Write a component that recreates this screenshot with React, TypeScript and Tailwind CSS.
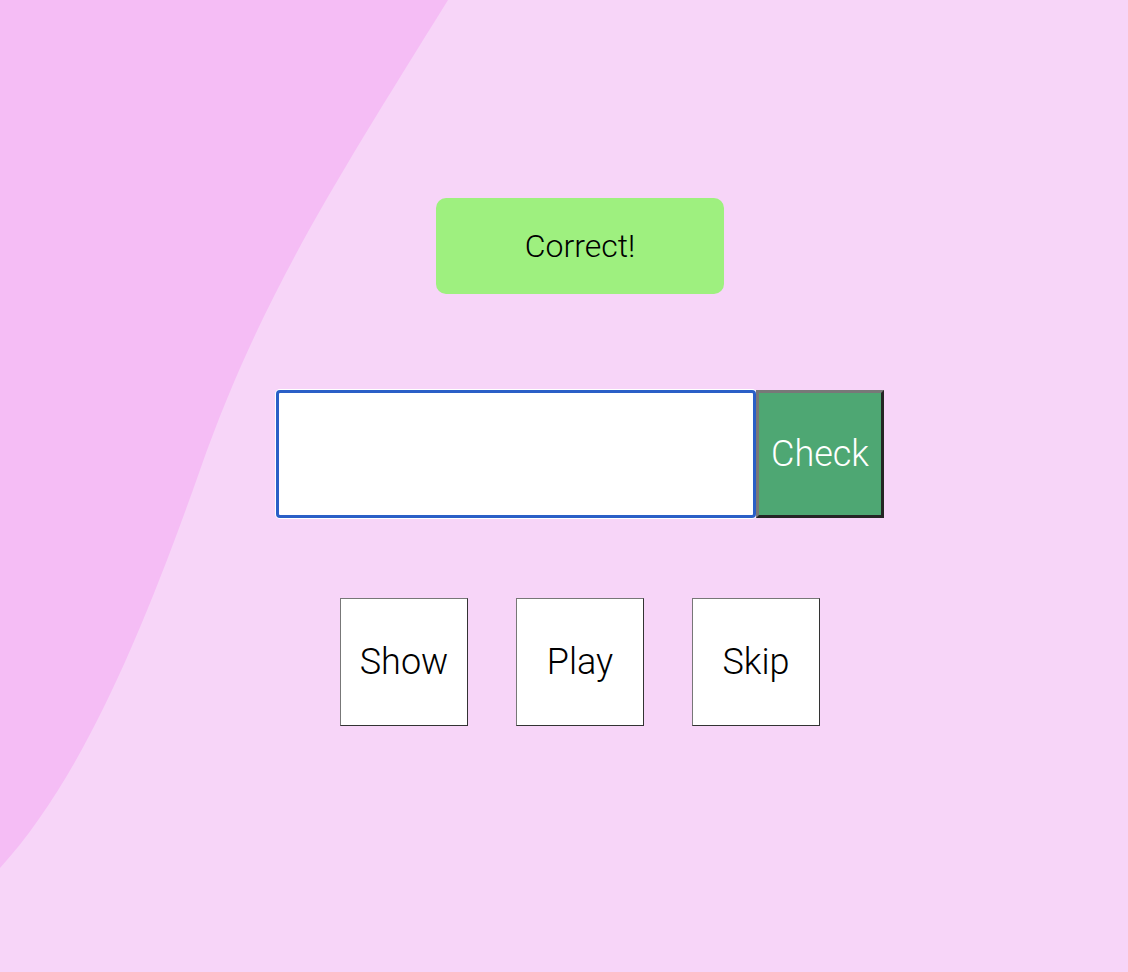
import React from "react";

// background wave, drawn once behind the content
function Wave() {
  return (
    <svg
      className="absolute inset-0 h-full w-full"
      viewBox="0 0 1128 972"
      preserveAspectRatio="none"
      aria-hidden
    >
      <path
        d="M448 0 C330 190 260 300 200 470 S80 780 0 868 L0 0 Z"
        fill="#f5bdf5"
      />
    </svg>
  );
}

const actions = ["Show", "Play", "Skip"];

export default function App() {
  return (
    <div
      className="relative min-h-screen h-[972px] overflow-hidden bg-[#f7d5f8]"
      style={{ fontFamily: "Roboto, 'Liberation Sans', sans-serif" }}
    >
      <Wave />

      <main className="relative flex flex-col items-center pt-[198px] pl-8">
        {/* feedback banner */}
        <div className="flex h-[96px] w-[288px] items-center justify-center rounded-[10px] bg-[#9ef07f] text-[32px] font-light text-black">
          Correct!
        </div>

        {/* answer row */}
        <div className="mt-[96px] flex">
          <input
            type="text"
            className="h-[128px] w-[480px] rounded-[4px] border-[3px] border-[#2a5fc7] bg-white px-3 text-[32px] shadow-[0_0_0_1px_#ffffff] outline-none"
          />
          <button className="h-[128px] w-[128px] border-[3px] border-t-[#787878] border-l-[#787878] border-r-[#252525] border-b-[#252525] bg-[#4ea773] text-[36px] font-light text-white">
            Check
          </button>
        </div>

        {/* action buttons */}
        <div className="mt-[80px] flex gap-12">
          {actions.map((label) => (
            <button
              key={label}
              className="h-[128px] w-[128px] border border-t-[#777] border-l-[#777] border-r-[#333] border-b-[#333] bg-white text-[36px] font-light text-black"
            >
              {label}
            </button>
          ))}
        </div>
      </main>
    </div>
  );
}
